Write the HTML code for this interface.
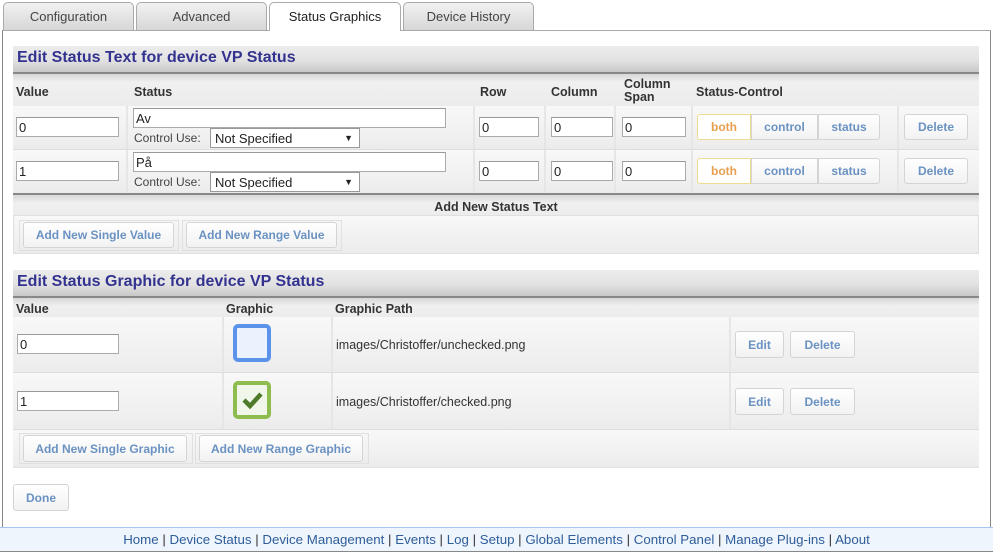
<!DOCTYPE html>
<html><head><meta charset="utf-8"><style>
*{box-sizing:border-box}
body{margin:0;width:1000px;height:552px;background:#fff;font-family:"Liberation Sans",Arial,sans-serif;position:relative;overflow:hidden;color:#222}
.a{position:absolute}
.tab{position:absolute;top:2px;height:29px;border:1px solid #aaa;border-bottom:none;border-radius:5px 5px 0 0;background:linear-gradient(#f2f2f2,#d6d6d6);font-size:13px;color:#444;text-align:center;line-height:28px}
.tab.on{background:#fff;height:29px;color:#222}
.cont{left:2px;top:30px;width:989px;height:498px;border:1px solid #888;border-top:1px solid #aaa}
.hdr{left:13px;width:966px;height:28px;background:linear-gradient(#ececec,#e2e2e2 55%,#c8c8c8);border-bottom:2px solid #888;font-weight:bold;font-size:16px;color:#33338f;padding:3px 0 0 4px}
.band{left:13px;width:966px;background:linear-gradient(#d8d8d8,#f0f0f0 8px,#ececec)}
.th{position:absolute;font-weight:bold;font-size:12.5px;color:#333}
.row{left:13px;width:966px;background:linear-gradient(#f8f8f8,#ececec);border-bottom:1px solid #ddd}
.cell{position:absolute;top:0;bottom:0;border-left:2px solid #e6e6e6}
input{position:absolute;height:20px;border:1px solid #aaa;border-top-color:#999;font:13px "Liberation Sans",Arial,sans-serif;padding:1px 2px;background:#fff;color:#222}
.sel{position:absolute;height:20px;border:1px solid #999;background:#fff;font-size:13px;padding:2px 4px;color:#222}
.btn{position:absolute;border:1px solid #d4d4d4;border-radius:3px;background:linear-gradient(#fff,#f2f2f2);color:#6a92c2;font-weight:bold;font-size:12px;text-align:center}
.lbl{position:absolute;font-size:12px;color:#444}
.foot{left:0;top:527px;width:993px;height:25px;background:#eef5fd;border-top:1px solid #a9c7ee;border-bottom:1px solid #888;font-size:13.3px;text-align:center;line-height:23px;color:#333}
.foot span{color:#2f5d9a}
</style></head><body>
<div class="tab" style="left:3px;width:131px">Configuration</div>
<div class="tab" style="left:136px;width:131px">Advanced</div>
<div class="tab on" style="left:269px;width:132px;z-index:2">Status Graphics</div>
<div class="tab" style="left:403px;width:131px">Device History</div>
<div class="a cont"></div>

<div class="a hdr" style="top:46px">Edit Status Text for device VP Status</div>
<div class="a band" style="top:74px;height:32px"></div>
<div class="th" style="left:16px;top:85px">Value</div>
<div class="th" style="left:134px;top:85px">Status</div>
<div class="th" style="left:480px;top:85px">Row</div>
<div class="th" style="left:551px;top:85px">Column</div>
<div class="th" style="left:624px;top:78px;line-height:13px">Column<br>Span</div>
<div class="th" style="left:696px;top:85px">Status-Control</div>

<div class="a row" style="top:106px;height:44px">
 <div class="cell" style="left:113px"></div><div class="cell" style="left:460px"></div><div class="cell" style="left:531px"></div><div class="cell" style="left:601px"></div><div class="cell" style="left:678px"></div><div class="cell" style="left:884px"></div>
</div>
<input style="left:16px;top:117px;width:103px" value="0">
<input style="left:133px;top:108px;width:313px" value="Av">
<div class="lbl" style="left:134px;top:131px">Control Use:</div>
<div class="sel" style="left:210px;top:128px;width:150px">Not Specified<span style="position:absolute;right:6px;font-size:9px;top:4px">▼</span></div>
<input style="left:479px;top:117px;width:60px" value="0">
<input style="left:551px;top:117px;width:62px" value="0">
<input style="left:622px;top:117px;width:64px" value="0">
<div class="btn" style="left:697px;top:114px;width:54px;height:26px;line-height:24px;color:#e8a050;border-color:#f0dc90;border-radius:3px 0 0 3px;background:#fff">both</div>
<div class="btn" style="left:751px;top:114px;width:67px;height:26px;line-height:24px;border-radius:0">control</div>
<div class="btn" style="left:818px;top:114px;width:62px;height:26px;line-height:24px;border-radius:0 3px 3px 0">status</div>
<div class="btn" style="left:904px;top:114px;width:64px;height:26px;line-height:24px">Delete</div>

<div class="a row" style="top:150px;height:44px">
 <div class="cell" style="left:113px"></div><div class="cell" style="left:460px"></div><div class="cell" style="left:531px"></div><div class="cell" style="left:601px"></div><div class="cell" style="left:678px"></div><div class="cell" style="left:884px"></div>
</div>
<input style="left:16px;top:161px;width:103px" value="1">
<input style="left:133px;top:152px;width:313px" value="På">
<div class="lbl" style="left:134px;top:175px">Control Use:</div>
<div class="sel" style="left:210px;top:172px;width:150px">Not Specified<span style="position:absolute;right:6px;font-size:9px;top:4px">▼</span></div>
<input style="left:479px;top:161px;width:60px" value="0">
<input style="left:551px;top:161px;width:62px" value="0">
<input style="left:622px;top:161px;width:64px" value="0">
<div class="btn" style="left:697px;top:158px;width:54px;height:26px;line-height:24px;color:#e8a050;border-color:#f0dc90;border-radius:3px 0 0 3px;background:#fff">both</div>
<div class="btn" style="left:751px;top:158px;width:67px;height:26px;line-height:24px;border-radius:0">control</div>
<div class="btn" style="left:818px;top:158px;width:62px;height:26px;line-height:24px;border-radius:0 3px 3px 0">status</div>
<div class="btn" style="left:904px;top:158px;width:64px;height:26px;line-height:24px">Delete</div>

<div class="a" style="left:13px;top:193px;width:966px;height:2px;background:#888"></div>
<div class="a band" style="top:195px;height:20px;text-align:center;font-weight:bold;font-size:12.5px;color:#333;line-height:24px">Add New Status Text</div>
<div class="a" style="left:13px;top:215px;width:966px;height:39px;background:linear-gradient(#f8f8f8,#ececec);border:1px solid #e0e0e0"></div>
<div class="a" style="left:19px;top:220px;width:160px;height:31px;border:1px solid #e0e0e0"></div>
<div class="a" style="left:182px;top:220px;width:160px;height:31px;border:1px solid #e0e0e0"></div>
<div class="btn" style="left:23px;top:222px;width:151px;height:26px;line-height:25px">Add New Single Value</div>
<div class="btn" style="left:186px;top:222px;width:151px;height:26px;line-height:25px">Add New Range Value</div>

<div class="a hdr" style="top:270px">Edit Status Graphic for device VP Status</div>
<div class="a band" style="top:298px;height:19px"></div>
<div class="th" style="left:16px;top:302px">Value</div>
<div class="th" style="left:226px;top:302px">Graphic</div>
<div class="th" style="left:335px;top:302px">Graphic Path</div>

<div class="a row" style="top:317px;height:56px"><div class="cell" style="left:209px"></div><div class="cell" style="left:318px"></div><div class="cell" style="left:716px"></div></div>
<input style="left:17px;top:334px;width:102px" value="0">
<div class="a" style="left:233px;top:324px;width:38px;height:38px;border:4px solid #5b93ea;border-radius:5px;background:#e9f2fd"></div>
<div class="lbl" style="left:336px;top:338px;font-size:12.5px;color:#333">images/Christoffer/unchecked.png</div>
<div class="btn" style="left:735px;top:331px;width:49px;height:27px;line-height:26px">Edit</div>
<div class="btn" style="left:790px;top:331px;width:65px;height:27px;line-height:26px">Delete</div>

<div class="a row" style="top:373px;height:57px"><div class="cell" style="left:209px"></div><div class="cell" style="left:318px"></div><div class="cell" style="left:716px"></div></div>
<input style="left:17px;top:391px;width:102px" value="1">
<div class="a" style="left:233px;top:381px;width:38px;height:38px;border:4px solid #8ebc4f;border-radius:5px;background:#f1f6ea"></div>
<svg class="a" style="left:233px;top:381px" width="38" height="38"><path d="M11 19 L17 25 L28 13" stroke="#4e7a2a" stroke-width="4.5" fill="none"/></svg>
<div class="lbl" style="left:336px;top:395px;font-size:12.5px;color:#333">images/Christoffer/checked.png</div>
<div class="btn" style="left:735px;top:388px;width:49px;height:27px;line-height:26px">Edit</div>
<div class="btn" style="left:790px;top:388px;width:65px;height:27px;line-height:26px">Delete</div>

<div class="a" style="left:13px;top:430px;width:966px;height:38px;background:linear-gradient(#f8f8f8,#ececec);border-bottom:1px solid #e0e0e0"></div>
<div class="a" style="left:19px;top:433px;width:174px;height:31px;border:1px solid #e0e0e0"></div>
<div class="a" style="left:195px;top:433px;width:174px;height:31px;border:1px solid #e0e0e0"></div>
<div class="btn" style="left:23px;top:435px;width:164px;height:27px;line-height:26px">Add New Single Graphic</div>
<div class="btn" style="left:199px;top:435px;width:164px;height:27px;line-height:26px">Add New Range Graphic</div>

<div class="btn" style="left:13px;top:484px;width:56px;height:27px;line-height:26px">Done</div>

<div class="a foot"><span>Home</span> | <span>Device Status</span> | <span>Device Management</span> | <span>Events</span> | <span>Log</span> | <span>Setup</span> | <span>Global Elements</span> | <span>Control Panel</span> | <span>Manage Plug-ins</span> | <span>About</span></div>
</body></html>
